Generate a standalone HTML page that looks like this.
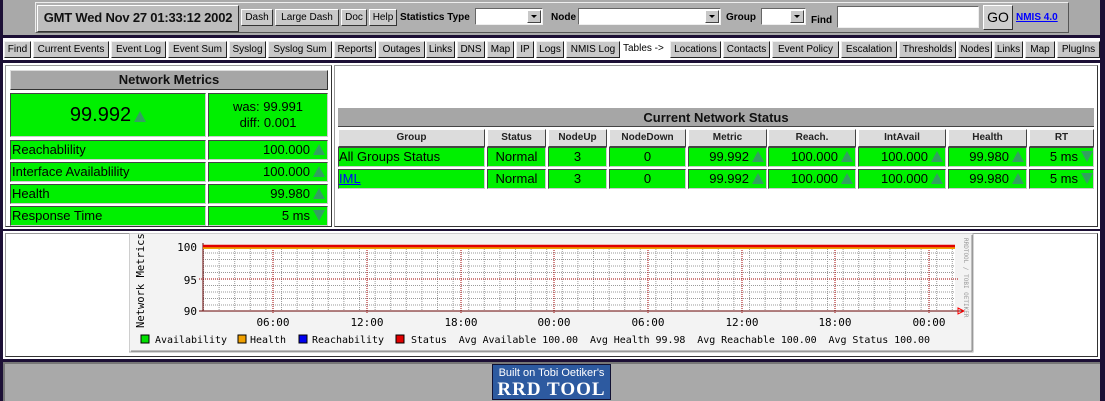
<!DOCTYPE html>
<html><head><meta charset="utf-8"><style>
*{margin:0;padding:0;box-sizing:border-box}
body{width:1105px;height:401px;background:#1c0f35;position:relative;overflow:hidden;font-family:"Liberation Sans",sans-serif;}
.a{position:absolute}
.btn{position:absolute;background:#c9c9c9;border:1px solid;border-color:#fff #333 #333 #fff;font-size:10px;line-height:15px;text-align:center;color:#000;white-space:nowrap}
.nb{position:absolute;top:41px;height:17px;background:#c8c8c8;border:1px solid;border-color:#eee #222 #222 #eee;font-size:10px;line-height:15px;text-align:center;color:#000;white-space:nowrap;overflow:hidden}
.sel{position:absolute;height:17px;background:#fff;border:1px solid;border-color:#666 #eee #eee #666}
.sel i{position:absolute;right:1px;top:1px;width:14px;height:13px;background:#c8c8c8;border:1px solid;border-color:#fff #444 #444 #fff}
.sel i:after{content:"";position:absolute;left:3px;top:4px;border:3px solid transparent;border-top:3px solid #000}
.lbl{position:absolute;font-size:10px;font-weight:bold;color:#000}
.g{position:absolute;background:#00f000;border:1px solid;border-color:#444 #ccc #ccc #444;font-size:13px;line-height:18px;color:#000;white-space:nowrap}
.h{position:absolute;background:#dcdcdc;border:1px solid;border-color:#fff #444 #444 #fff;font-size:10px;font-weight:bold;line-height:16px;text-align:center;color:#222}
.up{display:inline-block;width:0;height:0;border-left:6px solid transparent;border-right:6px solid transparent;border-bottom:11px solid #33a060;vertical-align:-1px;margin-left:3px}
.dn{display:inline-block;width:0;height:0;border-left:6px solid transparent;border-right:6px solid transparent;border-top:11px solid #33a060;vertical-align:-1px;margin-left:3px}
.r{text-align:right;padding-right:2px}
.c{text-align:center}
</style></head><body>
<div class="a" style="left:3px;top:0;width:1097px;height:35px;background:#a9a9a9"></div>
<div class="a" style="left:35px;top:2px;width:1034px;height:31px;background:#b0b0b0;border:1px solid;border-color:#eee #555 #555 #eee"></div>
<div class="a" style="left:37px;top:5px;width:202px;height:27px;background:#bdbdbd;border:1px solid;border-color:#fff #333 #333 #fff;font-size:13px;font-weight:bold;line-height:24px;text-align:center;color:#111;white-space:nowrap;letter-spacing:-0.2px">GMT Wed Nov 27 01:33:12 2002</div>
<div class="btn" style="left:241px;top:9px;width:32px;height:17px">Dash</div>
<div class="btn" style="left:275px;top:9px;width:64px;height:17px">Large Dash</div>
<div class="btn" style="left:341px;top:9px;width:26px;height:17px">Doc</div>
<div class="btn" style="left:369px;top:9px;width:28px;height:17px">Help</div>
<div class="lbl" style="left:400px;top:12px">Statistics Type</div>
<div class="sel" style="left:475px;top:8px;width:68px"><i></i></div>
<div class="lbl" style="left:551px;top:12px">Node</div>
<div class="sel" style="left:578px;top:8px;width:143px"><i></i></div>
<div class="lbl" style="left:726px;top:12px">Group</div>
<div class="sel" style="left:761px;top:8px;width:45px"><i></i></div>
<div class="lbl" style="left:811px;top:15px">Find</div>
<div class="a" style="left:837px;top:6px;width:142px;height:22px;background:#fff;border:1px solid;border-color:#666 #eee #eee #666"></div>
<div class="btn" style="left:983px;top:5px;width:30px;height:25px;font-size:14px;line-height:22px;background:#cfcfcf">GO</div>
<div class="a" style="left:1016px;top:12px;font-size:10px;font-weight:bold;color:#00f;text-decoration:underline">NMIS 4.0</div>
<div class="a" style="left:3px;top:38px;width:1097px;height:22px;background:#fff"></div>
<div class="nb" style="left:4px;width:27px">Find</div>
<div class="nb" style="left:33px;width:76px">Current Events</div>
<div class="nb" style="left:111px;width:55px">Event Log</div>
<div class="nb" style="left:168px;width:59px">Event Sum</div>
<div class="nb" style="left:229px;width:37px">Syslog</div>
<div class="nb" style="left:268px;width:64px">Syslog Sum</div>
<div class="nb" style="left:334px;width:42px">Reports</div>
<div class="nb" style="left:378px;width:47px">Outages</div>
<div class="nb" style="left:426px;width:29px">Links</div>
<div class="nb" style="left:457px;width:28px">DNS</div>
<div class="nb" style="left:487px;width:27px">Map</div>
<div class="nb" style="left:516px;width:18px">IP</div>
<div class="nb" style="left:536px;width:28px">Logs</div>
<div class="nb" style="left:566px;width:54px">NMIS Log</div>
<div class="a" style="left:623px;top:43px;font-size:10px">Tables -&gt;</div>
<div class="nb" style="left:670px;width:51px">Locations</div>
<div class="nb" style="left:723px;width:47px">Contacts</div>
<div class="nb" style="left:772px;width:67px">Event Policy</div>
<div class="nb" style="left:841px;width:56px">Escalation</div>
<div class="nb" style="left:899px;width:57px">Thresholds</div>
<div class="nb" style="left:958px;width:34px">Nodes</div>
<div class="nb" style="left:994px;width:29px">Links</div>
<div class="nb" style="left:1025px;width:30px">Map</div>
<div class="nb" style="left:1057px;width:43px">PlugIns</div>
<div class="a" style="left:3px;top:63px;width:1097px;height:166px;background:#fff"></div>
<div class="a" style="left:5px;top:65px;width:327px;height:162px;border:1px solid;border-color:#999 #333 #333 #999"></div>
<div class="a" style="left:334px;top:65px;width:764px;height:162px;border:1px solid;border-color:#999 #333 #333 #999"></div>
<div class="a" style="left:10px;top:70px;width:318px;height:20px;background:#a6a6a6;border:1px solid;border-color:#ddd #333 #333 #ddd;font-size:13px;font-weight:bold;line-height:18px;text-align:center;color:#111">Network Metrics</div>
<div class="g c" style="left:10px;top:93px;width:196px;height:44px;font-size:20px;line-height:42px">99.992<span class="up"></span></div>
<div class="g c" style="left:208px;top:93px;width:120px;height:44px;line-height:16px;padding-top:5px">was: 99.991<br>diff: 0.001</div>
<div class="g" style="left:10px;top:140px;width:196px;height:20px;padding-left:1px">Reachablility</div>
<div class="g r" style="left:208px;top:140px;width:120px;height:20px">100.000<span class="up"></span></div>
<div class="g" style="left:10px;top:162px;width:196px;height:20px;padding-left:1px">Interface Availablility</div>
<div class="g r" style="left:208px;top:162px;width:120px;height:20px">100.000<span class="up"></span></div>
<div class="g" style="left:10px;top:184px;width:196px;height:20px;padding-left:1px">Health</div>
<div class="g r" style="left:208px;top:184px;width:120px;height:20px">99.980<span class="up"></span></div>
<div class="g" style="left:10px;top:206px;width:196px;height:20px;padding-left:1px">Response Time</div>
<div class="g r" style="left:208px;top:206px;width:120px;height:20px">5 ms<span class="dn"></span></div>
<div class="a" style="left:338px;top:108px;width:756px;height:19px;background:#a6a6a6;border-bottom:1px solid #444;font-size:13px;font-weight:bold;line-height:19px;text-align:center;color:#111">Current Network Status</div>
<div class="h" style="left:338px;top:129px;width:147px;height:18px">Group</div>
<div class="h" style="left:487px;top:129px;width:59px;height:18px">Status</div>
<div class="h" style="left:548px;top:129px;width:59px;height:18px">NodeUp</div>
<div class="h" style="left:609px;top:129px;width:77px;height:18px">NodeDown</div>
<div class="h" style="left:688px;top:129px;width:79px;height:18px">Metric</div>
<div class="h" style="left:768px;top:129px;width:88px;height:18px">Reach.</div>
<div class="h" style="left:858px;top:129px;width:88px;height:18px">IntAvail</div>
<div class="h" style="left:948px;top:129px;width:79px;height:18px">Health</div>
<div class="h" style="left:1029px;top:129px;width:65px;height:18px">RT</div>
<div class="g" style="left:338px;top:147px;width:147px;height:20px">All Groups Status</div>
<div class="g c" style="left:487px;top:147px;width:59px;height:20px">Normal</div>
<div class="g c" style="left:548px;top:147px;width:59px;height:20px">3</div>
<div class="g c" style="left:609px;top:147px;width:77px;height:20px">0</div>
<div class="g r" style="left:688px;top:147px;width:79px;height:20px">99.992<span class="up"></span></div>
<div class="g r" style="left:768px;top:147px;width:88px;height:20px">100.000<span class="up"></span></div>
<div class="g r" style="left:858px;top:147px;width:88px;height:20px">100.000<span class="up"></span></div>
<div class="g r" style="left:948px;top:147px;width:79px;height:20px">99.980<span class="up"></span></div>
<div class="g r" style="left:1029px;top:147px;width:65px;height:20px;padding-right:0">5 ms<span class="dn"></span></div>
<div class="g" style="left:338px;top:169px;width:147px;height:20px"><span style="color:#00f;text-decoration:underline">IML</span></div>
<div class="g c" style="left:487px;top:169px;width:59px;height:20px">Normal</div>
<div class="g c" style="left:548px;top:169px;width:59px;height:20px">3</div>
<div class="g c" style="left:609px;top:169px;width:77px;height:20px">0</div>
<div class="g r" style="left:688px;top:169px;width:79px;height:20px">99.992<span class="up"></span></div>
<div class="g r" style="left:768px;top:169px;width:88px;height:20px">100.000<span class="up"></span></div>
<div class="g r" style="left:858px;top:169px;width:88px;height:20px">100.000<span class="up"></span></div>
<div class="g r" style="left:948px;top:169px;width:79px;height:20px">99.980<span class="up"></span></div>
<div class="g r" style="left:1029px;top:169px;width:65px;height:20px;padding-right:0">5 ms<span class="dn"></span></div>
<div class="a" style="left:3px;top:231px;width:1097px;height:128px;background:#fff"></div>
<div class="a" style="left:5px;top:233px;width:1093px;height:124px;border:1px solid;border-color:#999 #333 #333 #999"></div>
<svg class="a" style="left:129px;top:233px" width="845" height="120" xmlns="http://www.w3.org/2000/svg">
<defs>
<pattern id="mv" x="74" y="0" width="15.6" height="10" patternUnits="userSpaceOnUse"><line x1="0.5" y1="0" x2="0.5" y2="10" stroke="#999" stroke-dasharray="1,1"/></pattern>
<pattern id="mh" x="0" y="13" width="10" height="6.5" patternUnits="userSpaceOnUse"><line x1="0" y1="0.5" x2="10" y2="0.5" stroke="#999" stroke-dasharray="1,1"/></pattern>
</defs>
<rect x="0" y="0" width="844" height="119" fill="#f3f3f3" stroke="#aaa"/>
<line x1="2" y1="118" x2="843" y2="118" stroke="#888"/>
<line x1="843" y1="2" x2="843" y2="118" stroke="#888"/>
<rect x="74" y="13" width="752" height="65" fill="#fff"/>
<rect x="74" y="13" width="752" height="65" fill="url(#mv)"/>
<rect x="74" y="13" width="752" height="65" fill="url(#mh)"/>
<g stroke="#a00000" stroke-dasharray="1,1">
<line x1="144" y1="13" x2="144" y2="80"/><line x1="238" y1="13" x2="238" y2="80"/><line x1="332" y1="13" x2="332" y2="80"/><line x1="425" y1="13" x2="425" y2="80"/><line x1="519" y1="13" x2="519" y2="80"/><line x1="613" y1="13" x2="613" y2="80"/><line x1="706" y1="13" x2="706" y2="80"/><line x1="800" y1="13" x2="800" y2="80"/>
<line x1="70" y1="46" x2="830" y2="46"/>
</g>
<line x1="70" y1="78" x2="834" y2="78" stroke="#600"/>
<line x1="74" y1="10" x2="74" y2="78" stroke="#600"/>
<polygon points="829,75 835,78 829,81" fill="none" stroke="#f00"/>
<line x1="74" y1="15" x2="826" y2="15" stroke="#f0a000" stroke-width="2"/>
<line x1="74" y1="13" x2="826" y2="13" stroke="#e00000" stroke-width="2.5"/>
<g font-family="DejaVu Sans Mono,Liberation Mono,monospace" font-size="11" fill="#000">
<text x="68" y="18" text-anchor="end">100</text>
<text x="68" y="51" text-anchor="end">95</text>
<text x="68" y="82" text-anchor="end">90</text>
<g text-anchor="middle"><text x="144" y="93">06:00</text><text x="238" y="93">12:00</text><text x="332" y="93">18:00</text><text x="425" y="93">00:00</text><text x="519" y="93">06:00</text><text x="613" y="93">12:00</text><text x="706" y="93">18:00</text><text x="800" y="93">00:00</text></g>
<text transform="translate(15,95) rotate(-90)" font-size="10.5">Network Metrics</text>
<text transform="translate(835,5) rotate(90)" font-size="6" fill="#999">RRDTOOL / TOBI OETIKER</text>
<g font-size="10">
<rect x="12" y="102" width="8" height="8" fill="#00e000" stroke="#000"/><text x="26" y="110" textLength="72">Availability</text>
<rect x="109" y="102" width="8" height="8" fill="#f0a000" stroke="#000"/><text x="121" y="110" textLength="36">Health</text>
<rect x="170" y="102" width="8" height="8" fill="#0000f0" stroke="#000"/><text x="183" y="110" textLength="72">Reachability</text>
<rect x="267" y="102" width="8" height="8" fill="#e00000" stroke="#000"/><text x="282" y="110" xml:space="preserve" textLength="519">Status  Avg Available 100.00  Avg Health 99.98  Avg Reachable 100.00  Avg Status 100.00</text>
</g>
</g>
</svg>
<div class="a" style="left:3px;top:362px;width:1097px;height:39px;background:#a9a9a9;border-left:2px solid #777;border-top:2px solid #777"></div>
<div class="a" style="left:492px;top:364px;width:119px;height:36px;background:#2d5aa0;border:1px solid #113;color:#fff;text-align:center;overflow:hidden">
<div style="font-size:11px;line-height:13px;margin-top:2px">Built on Tobi Oetiker's</div>
<div style="font-family:'Liberation Serif',serif;font-size:19px;font-weight:bold;line-height:19px;letter-spacing:1px">RRD TOOL</div>
</div>
</body></html>
